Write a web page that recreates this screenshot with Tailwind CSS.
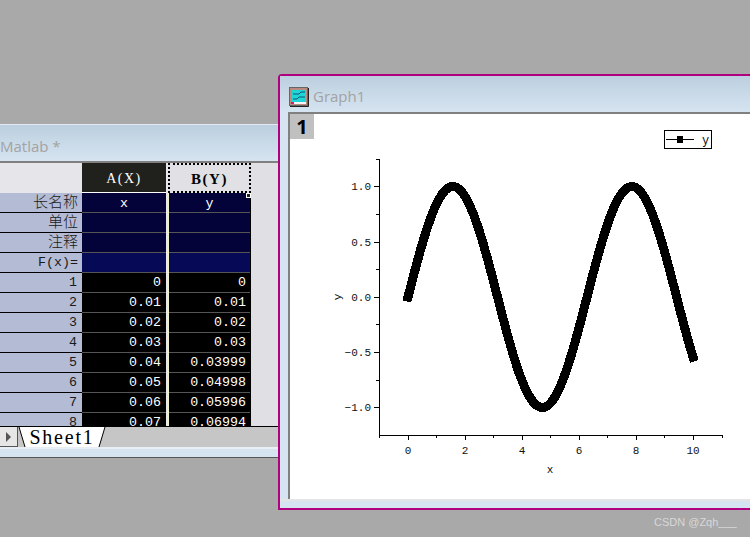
<!DOCTYPE html>
<html lang="en">
<head>
  <meta charset="UTF-8" />
  <title>Graph1</title>
  <script src="https://cdn.jsdelivr.net/npm/@tailwindcss/browser@4"></script>
</head>
<body class="bg-[#a9a9a9] w-[750px] h-[537px] overflow-hidden relative font-['Liberation_Mono','Noto_Sans_CJK_SC',monospace]">

  <!-- Worksheet window -->
  <div class="absolute left-0 top-[124px] w-[279px] h-[334px] flex flex-col border-t border-[#e2e9f0] border-b border-b-[#555]">
    <div class="h-[38px] shrink-0 flex items-center pt-[6px] bg-gradient-to-b from-[#bccfdf] to-[#d6e4f1] border-b-2 border-[#808080] font-['Open_Sans',sans-serif] text-[15px] text-[#a3a3a3]">Matlab *</div>

    <div class="flex-1 flex bg-[#dfdfe4] min-h-0 overflow-hidden">
      <!-- Row labels -->
      <div class="w-[82px] shrink-0 text-[#1a1a1a] text-[13.3px] text-right">
        <div class="h-[30px] bg-[#e6e6ea]"></div>
        <div class="h-[20px] pr-[4px] leading-[15px] bg-[#b4bbd4] border-b border-black font-['Noto_Sans_CJK_SC',sans-serif] text-[15px] font-light">长名称</div>
        <div class="h-[20px] pr-[4px] leading-[15px] bg-[#b4bbd4] border-b border-black font-['Noto_Sans_CJK_SC',sans-serif] text-[15px] font-light">单位</div>
        <div class="h-[20px] pr-[4px] leading-[15px] bg-[#b4bbd4] border-b border-black font-['Noto_Sans_CJK_SC',sans-serif] text-[15px] font-light">注释</div>
        <div class="h-[20px] pr-[4px] leading-[19px] bg-[#b4bbd4] border-b border-black">F(x)=</div>
        <div class="h-[20px] pr-[5px] leading-[19px] bg-[#b4bbd4] border-b border-black">1</div>
        <div class="h-[20px] pr-[5px] leading-[19px] bg-[#b4bbd4] border-b border-black">2</div>
        <div class="h-[20px] pr-[5px] leading-[19px] bg-[#b4bbd4] border-b border-black">3</div>
        <div class="h-[20px] pr-[5px] leading-[19px] bg-[#b4bbd4] border-b border-black">4</div>
        <div class="h-[20px] pr-[5px] leading-[19px] bg-[#b4bbd4] border-b border-black">5</div>
        <div class="h-[20px] pr-[5px] leading-[19px] bg-[#b4bbd4] border-b border-black">6</div>
        <div class="h-[20px] pr-[5px] leading-[19px] bg-[#b4bbd4] border-b border-black">7</div>
        <div class="h-[20px] pr-[5px] leading-[19px] bg-[#b4bbd4] border-b border-black">8</div>
      </div>

      <!-- Column A -->
      <div class="w-[84px] shrink-0 text-white text-[13.3px] text-right">
        <div class="h-[30px] bg-[#20211c] border-b border-white text-center leading-[31px] font-['Liberation_Serif',serif] text-[14px] tracking-[1.5px]">A(X)</div>
        <div class="h-[20px] bg-[#03033a] border-b border-[#555] text-center leading-[22px]">x</div>
        <div class="h-[20px] bg-[#03033a] border-b border-[#555]"></div>
        <div class="h-[20px] bg-[#03033a] border-b border-[#555]"></div>
        <div class="h-[20px] bg-[#060a56] border-b border-[#555]"></div>
        <div class="h-[20px] bg-black border-b border-[#555] pr-[5px] leading-[19px]">0</div>
        <div class="h-[20px] bg-black border-b border-[#555] pr-[5px] leading-[19px]">0.01</div>
        <div class="h-[20px] bg-black border-b border-[#555] pr-[5px] leading-[19px]">0.02</div>
        <div class="h-[20px] bg-black border-b border-[#555] pr-[5px] leading-[19px]">0.03</div>
        <div class="h-[20px] bg-black border-b border-[#555] pr-[5px] leading-[19px]">0.04</div>
        <div class="h-[20px] bg-black border-b border-[#555] pr-[5px] leading-[19px]">0.05</div>
        <div class="h-[20px] bg-black border-b border-[#555] pr-[5px] leading-[19px]">0.06</div>
        <div class="h-[20px] bg-black border-b border-[#555] pr-[5px] leading-[19px]">0.07</div>
      </div>

      <!-- Column B, selected -->
      <div class="w-[85px] shrink-0 text-white text-[13.3px] text-right relative border-l-2 border-[#e8e8ec]">
        <div class="h-[30px] bg-[#e0e0e5] border-2 border-dotted border-black text-black font-bold text-center leading-[28px] font-['Liberation_Serif',serif] text-[15px] tracking-[1.5px]">B(Y)</div>
        <div class="border-l border-[#f2f2c8] border-r border-r-black">
          <div class="h-[20px] bg-[#03033a] border-b border-[#555] text-center leading-[22px]">y</div>
          <div class="h-[20px] bg-[#03033a] border-b border-[#555]"></div>
          <div class="h-[20px] bg-[#03033a] border-b border-[#555]"></div>
          <div class="h-[20px] bg-[#060a56] border-b border-[#555]"></div>
          <div class="h-[20px] bg-black border-b border-[#555] pr-[4px] leading-[19px]">0</div>
          <div class="h-[20px] bg-black border-b border-[#555] pr-[4px] leading-[19px]">0.01</div>
          <div class="h-[20px] bg-black border-b border-[#555] pr-[4px] leading-[19px]">0.02</div>
          <div class="h-[20px] bg-black border-b border-[#555] pr-[4px] leading-[19px]">0.03</div>
          <div class="h-[20px] bg-black border-b border-[#555] pr-[4px] leading-[19px]">0.03999</div>
          <div class="h-[20px] bg-black border-b border-[#555] pr-[4px] leading-[19px]">0.04998</div>
          <div class="h-[20px] bg-black border-b border-[#555] pr-[4px] leading-[19px]">0.05996</div>
          <div class="h-[20px] bg-black border-b border-[#555] pr-[4px] leading-[19px]">0.06994</div>
        </div>
        <div class="absolute right-0 top-[30px] w-[5px] h-[5px] bg-[#222] border border-white"></div>
      </div>
    </div>

    <!-- Sheet tabs -->
    <div class="h-[21px] shrink-0 flex bg-[#c6c6c6] border-t border-black">
      <div class="w-[18px] h-[20px] bg-[#e6e6e6] border-r border-b border-[#555] flex items-center justify-center">
        <svg width="7" height="10" viewBox="0 0 7 10"><path d="M1 0 L6 5 L1 10 Z" fill="#555"/></svg>
      </div>
      <div class="relative w-[88px] h-[20px] text-black">
        <svg class="absolute left-0 top-0" width="88" height="20" viewBox="0 0 88 20">
          <path d="M1 0 H87 L81 20 H7 Z" fill="#fff"/>
          <path d="M1 0 L7 20 M87 0 L81 20" stroke="#000" fill="none"/>
        </svg>
        <div class="relative font-['Liberation_Serif',serif] text-[20px] leading-[20px] tracking-[1.8px] text-center">Sheet1</div>
      </div>
    </div>
    <div class="h-[10px] shrink-0 bg-[#d6e4f1] border-t-2 border-[#e8eef4]"></div>
  </div>

  <!-- Graph window -->
  <div class="absolute left-[278px] top-[74px] w-[480px] h-[436px] flex flex-col border-2 border-[#b0007f] rounded-tl-[4px] bg-[#d6e4f1]">
    <div class="h-[36px] shrink-0 flex items-center pt-[5px] pl-[9px] gap-[4px] bg-gradient-to-b from-[#bccfdf] to-[#d6e4f1] font-['Open_Sans',sans-serif] text-[15px] text-[#a3a3a3]">
      <svg width="20" height="20" viewBox="0 0 20 20" class="shrink-0">
        <rect x="0.5" y="0.5" width="18" height="18" fill="#b98a80" stroke="#666"/>
        <rect x="3" y="3" width="14" height="13" fill="#1fd6d6"/>
        <path d="M4 7 H10 L12 5 H16 M4 12 H8 L10 10 H16" stroke="#14507a" fill="none"/>
        <rect x="3" y="15" width="14" height="2" fill="#f4f4f4"/>
        <rect x="2" y="15" width="3" height="2" fill="#d0206a"/>
        <path d="M1 19.5 H19.5 V1" stroke="#222" fill="none"/>
      </svg>
      <span>Graph1</span>
    </div>

    <div class="relative flex-1 min-h-0 ml-[8px] bg-white border-t-2 border-l-2 border-[#808080]">
      <div class="absolute left-0 top-0 w-[24px] h-[25px] bg-[#c0c0c0] font-['Open_Sans',sans-serif] font-bold text-[20px] leading-[25px] text-center text-black">1</div>

      <!-- Plot, coordinates are page px minus the content origin -->
      <svg class="absolute left-0 top-0" width="460" height="385" viewBox="290 114 460 385" font-family="'Liberation Mono', monospace" font-size="11" fill="#111">
        <g stroke="#000" stroke-width="1" fill="none" shape-rendering="crispEdges">
          <path d="M379.500 159 V435.500 H722"/>
          <path d="M376 159.500 H379 M374 186.500 H379 M376 214.500 H379 M374 242.500 H379 M376 269.500 H379 M374 297.500 H379 M376 324.500 H379 M374 352.500 H379 M376 380.500 H379 M374 407.500 H379"/>
          <path d="M379.500 435 V438 M408.500 435 V440 M436.500 435 V438 M465.500 435 V440 M493.500 435 V438 M522.500 435 V440 M550.500 435 V438 M579.500 435 V440 M607.500 435 V438 M636.500 435 V440 M664.500 435 V438 M693.500 435 V440 M722.500 435 V438"/>
        </g>
        <path id="curve" fill="none" stroke="#000" stroke-width="9" stroke-linejoin="round" stroke-linecap="square" shape-rendering="crispEdges"/>
        <g text-anchor="end">
          <text x="371" y="190">1.0</text>
          <text x="371" y="246">0.5</text>
          <text x="371" y="301">0.0</text>
          <text x="371" y="356">−0.5</text>
          <text x="371" y="411">−1.0</text>
        </g>
        <g text-anchor="middle">
          <text x="408" y="454">0</text>
          <text x="465" y="454">2</text>
          <text x="522" y="454">4</text>
          <text x="579" y="454">6</text>
          <text x="636" y="454">8</text>
          <text x="693" y="454">10</text>
          <text x="550" y="473">x</text>
          <text transform="translate(341 297) rotate(-90)">y</text>
        </g>
        <!-- Legend -->
        <rect x="664.500" y="130.500" width="47" height="18" fill="#fff" stroke="#000" shape-rendering="crispEdges"/>
        <path d="M666 139.500 H694" stroke="#000" shape-rendering="crispEdges"/>
        <rect x="677" y="136" width="6" height="7" fill="#000"/>
        <text x="702" y="143.500" font-size="12">y</text>
      </svg>
    </div>
    <div class="h-[9px] shrink-0 border-t-2 border-[#e4e4e4]"></div>
  </div>

  <!-- Watermark -->
  <div class="absolute left-[654px] top-[514px] font-['Liberation_Sans',sans-serif] text-[11px] text-[#d8d8d8]">CSDN @Zqh___</div>

  <script>
    // y = sin(x), x from 0 to 10 in steps of 0.05
    const pts = [];
    for (let x = 0; x <= 10.001; x += 0.05) {
      pts.push((408 + 28.5 * x).toFixed(1) + ' ' + (297 - 110.5 * Math.sin(x)).toFixed(1));
    }
    document.getElementById('curve').setAttribute('d', 'M' + pts.join(' L'));
  </script>
</body>
</html>
